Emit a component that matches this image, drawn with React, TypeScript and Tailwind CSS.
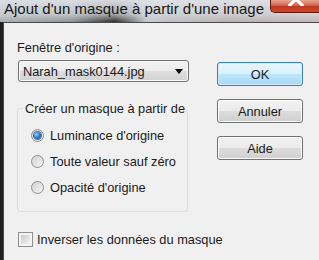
function Radio({ checked, label }: { checked?: boolean; label: string }) {
  return (
    <div className="h-[26px] flex items-center">
      <div className="ml-[13px] w-[13px] h-[13px] rounded-full border border-[#8e8f8f] bg-[linear-gradient(135deg,#d2d2d2,#f6f6f6)] flex items-center justify-center shrink-0">
        {checked && (
          <div className="w-[7px] h-[7px] rounded-full bg-[radial-gradient(circle_at_35%_35%,#a9d4fb_0%,#3c86d4_40%,#0e3f7a_100%)] shadow-[0_0_0_1px_#3a6da8]" />
        )}
      </div>
      <span className="ml-[6px] leading-[15px] whitespace-nowrap">{label}</span>
    </div>
  );
}

function Button({ label, primary }: { label: string; primary?: boolean }) {
  return (
    <div
      className={`w-[86px] h-[24px] rounded-[3px] border flex items-center justify-center leading-[15px] ${
        primary
          ? "border-[#3c7fb1] bg-[linear-gradient(180deg,#eaf6fd_0%,#d9f0fc_50%,#bee6fd_50%,#a7d9f5_100%)] shadow-[inset_0_0_0_1px_#d2ebf8]"
          : "border-[#707070] bg-[linear-gradient(180deg,#f2f2f2_0%,#ebebeb_50%,#dddddd_50%,#cfcfcf_100%)] shadow-[inset_0_0_0_1px_#fcfcfc]"
      }`}
    >
      {label}
    </div>
  );
}

export default function App() {
  return (
    <div className="w-[319px] h-[260px] overflow-hidden flex flex-col font-['Liberation_Sans',Arial,sans-serif] text-[12.8px] text-[#1a1a1a]">
      {/* title bar */}
      <div className="h-[22px] shrink-0 flex bg-[linear-gradient(180deg,rgba(222,226,230,0.95)_0%,rgba(214,218,222,0.7)_65%,rgba(214,218,222,0)_100%),linear-gradient(90deg,#a9adb1_0%,#8f9295_22%,#2c2c2c_36%,#c3c7cb_46%,#b9adaf_72%,#c8b6b6_100%)]">
        <span className="pl-[4px] text-[15px] leading-[17px] text-[#161616] whitespace-nowrap">
          Ajout d'un masque à partir d'une image
        </span>
        <div className="ml-auto w-[49px] h-[13px] shrink-0 rounded-bl-[5px] border border-t-0 border-r-0 border-[#5d1a10] bg-[linear-gradient(180deg,#e9a48f_0%,#d3604a_45%,#c13a22_55%,#c9482c_100%)] flex justify-center overflow-hidden">
          <svg width="16" height="14" viewBox="0 0 16 14" className="-mt-[8px] ml-[2px]">
            <path d="M2 1 L14 13 M14 1 L2 13" stroke="#ffffff" strokeWidth="3.2" strokeLinecap="square" />
          </svg>
        </div>
      </div>

      {/* body */}
      <div className="flex-1 flex bg-[#1f1f1f] pl-[3px]">
        <div className="flex-1 flex bg-[#f0f0f0] border-t border-l border-[#4a4a4a] pl-[13px] pt-[17px]">
          {/* left column */}
          <div className="w-[172px] shrink-0 flex flex-col">
            <span className="leading-[15px]">Fenêtre d'origine :</span>
            <div className="mt-[5px] ml-[1px] h-[22px] rounded-[3px] border border-[#707070] bg-[linear-gradient(180deg,#f3f3f3_0%,#ececec_50%,#dedede_50%,#d2d2d2_100%)] shadow-[inset_0_0_0_1px_#fafafa] flex items-center pl-[4px] pr-[5px]">
              <span className="leading-[15px]">Narah_mask0144.jpg</span>
              <svg width="8" height="5" viewBox="0 0 8 5" className="ml-auto">
                <path d="M0 0 H8 L4 5 Z" fill="#000" />
              </svg>
            </div>

            <fieldset className="mt-[19px] w-[170px] border border-[#d5dfe5] rounded-[3px] pb-[11px]">
              <legend className="ml-[5px] px-[2px] leading-[15px] whitespace-nowrap">Créer un masque à partir de</legend>
              <div className="pt-[6px] flex flex-col">
                <Radio checked label="Luminance d'origine" />
                <Radio label="Toute valeur sauf zéro" />
                <Radio label="Opacité d'origine" />
              </div>
            </fieldset>

            <div className="mt-[20px] h-[15px] flex items-center">
              <div className="ml-[1px] w-[15px] h-[15px] border border-[#8e8f8f] bg-[#f4f4f4] p-[2px] shrink-0">
                <div className="w-full h-full bg-[linear-gradient(135deg,#c8c8c8,#f4f4f4)]" />
              </div>
              <span className="ml-[4px] leading-[15px] whitespace-nowrap">Inverser les données du masque</span>
            </div>
          </div>

          {/* right column */}
          <div className="ml-[28px] mt-[22px] flex flex-col gap-[13px]">
            <Button primary label="OK" />
            <Button label="Annuler" />
            <Button label="Aide" />
          </div>
        </div>
      </div>
    </div>
  );
}
